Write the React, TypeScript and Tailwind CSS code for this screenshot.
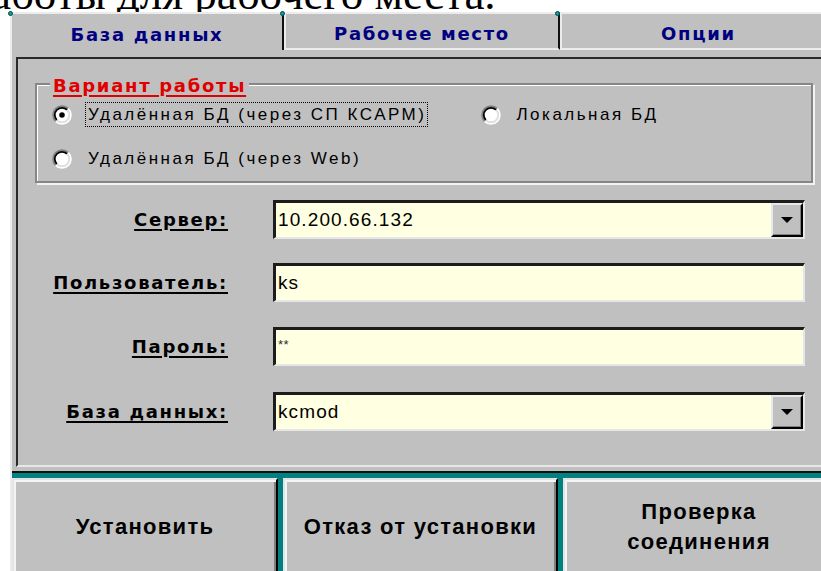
import React from "react";

const boldUi = "font-['DejaVu_Sans',sans-serif] font-bold text-[18px] tracking-[1.7px]";
const plainUi = "font-['Liberation_Sans',Arial,sans-serif] text-[17px] tracking-[2.5px]";
const fieldText = "font-['Liberation_Sans',Arial,sans-serif] text-[19px] tracking-[1.1px]";

function Radio({ checked }: { checked?: boolean }) {
  return (
    <svg width="20" height="20" viewBox="0 0 18 18" className="shrink-0">
      <circle cx="9" cy="9" r="7" fill="#fff" />
      <path d="M3.34 14.66 A8 8 0 0 1 14.66 3.34" fill="none" stroke="#808080" strokeWidth="1.6" />
      <path d="M14.66 3.34 A8 8 0 0 1 3.34 14.66" fill="none" stroke="#ffffff" strokeWidth="1.6" />
      <path d="M4.4 13.6 A6.5 6.5 0 0 1 13.6 4.4" fill="none" stroke="#000" strokeWidth="1.6" />
      <path d="M13.6 4.4 A6.5 6.5 0 0 1 4.4 13.6" fill="none" stroke="#dfdfdf" strokeWidth="1.6" />
      {checked && <circle cx="9" cy="9" r="2.5" fill="#000" />}
    </svg>
  );
}

function ArrowButton() {
  return (
    <div className="flex h-full w-[32px] shrink-0 items-center justify-center border-2 border-t-[#e8e8e8] border-l-[#e8e8e8] border-b-black border-r-black bg-[#c0c0c0] shadow-[inset_-1px_-1px_0_#808080]">
      <svg width="12" height="6" viewBox="0 0 12 6">
        <path d="M0 0H12L6 6Z" fill="#000" />
      </svg>
    </div>
  );
}

function Field({ value, combo, secret }: { value: string; combo?: boolean; secret?: boolean }) {
  return (
    <div className="flex h-[39px] w-[532px] border-t-[3px] border-l-[3px] border-b-2 border-r-2 border-t-[#1c1c1c] border-l-[#1c1c1c] border-b-[#e6e6e6] border-r-[#e6e6e6] bg-[#ffffe1]">
      {secret ? (
        <div className="flex-1 pl-[2px] pt-[8px] font-['Liberation_Sans',Arial,sans-serif] text-[13px] leading-[13px] tracking-[0.5px] text-[#303030]">
          {value}
        </div>
      ) : (
        <div className={`flex flex-1 items-center pl-[2px] text-black ${fieldText}`}>{value}</div>
      )}
      {combo && <ArrowButton />}
    </div>
  );
}

function Row({ label, children, top }: { label: string; children: React.ReactNode; top: string }) {
  return (
    <div className={`flex items-center ${top}`}>
      <div className="w-[210px] text-right text-black">
        <span className={`${boldUi} underline decoration-2 underline-offset-[3px]`}>{label}</span>
      </div>
      <div className="ml-[45px]">{children}</div>
    </div>
  );
}

function Tab({ title, active, last }: { title: string; active?: boolean; last?: boolean }) {
  const edges = active
    ? "w-[272px] border-t-2 border-r-2 border-t-[#ececec] border-r-[#101010]"
    : last
      ? "w-[275px] border-t-2 border-l-2 border-b-2 border-t-[#ececec] border-l-[#ececec] border-b-[#ececec]"
      : "w-[276px] border-t-2 border-l-2 border-r-2 border-b-2 border-t-[#ececec] border-l-[#ececec] border-b-[#ececec] border-r-[#101010]";
  return (
    <div className={`flex h-full shrink-0 items-center justify-center pt-[4px] ${edges}`}>
      <span className={`${boldUi} text-[#000080]`}>{title}</span>
    </div>
  );
}

function Pin({ left }: { left: string }) {
  return (
    <span className={`absolute top-[-1px] ${left} h-[5px] w-[5px] rounded-full border border-[#004848] bg-[#00a0a0]`} />
  );
}

function BigButton({ children, width }: { children: React.ReactNode; width: string }) {
  return (
    <div
      className={`flex h-[98px] ${width} shrink-0 items-center justify-center border-2 border-t-[#e4e4e4] border-l-[#e4e4e4] border-b-black border-r-black bg-[#c0c0c0] shadow-[inset_2px_2px_0_#f4f4f4,inset_-2px_-2px_0_#808080] text-center font-['Liberation_Sans',Arial,sans-serif] text-[22px] font-bold leading-[30px] tracking-[1.3px] text-black`}
    >
      {children}
    </div>
  );
}

export default function App() {
  return (
    <div className="relative h-[571px] w-[821px] overflow-hidden bg-white">
      {/* document line above the settings window */}
      <div className="h-[12px] overflow-hidden">
        <div className="ml-[-9px] mt-[-28px] whitespace-nowrap font-['Liberation_Serif','Times_New_Roman',serif] text-[45px] leading-[45px] text-black">
          аботы для рабочего места.
        </div>
      </div>

      {/* settings frame */}
      <div className="relative ml-[10px] w-[825px] border-l-2 border-l-[#ececec] bg-[#c0c0c0]">
        <div className="flex h-[38px]">
          <Tab title="База данных" active />
          <Tab title="Рабочее место" />
          <Tab title="Опции" last />
        </div>
        <Pin left="left-[-4px]" />
        <Pin left="left-[268px]" />
        <Pin left="left-[543px]" />

        <div className="border-b-2 border-b-[#101010] pb-[4px] pl-[4px] pt-[7px]">
          <div className="border-t-2 border-l-2 border-b-2 border-t-[#2a2a2a] border-l-[#2a2a2a] border-b-[#e6e6e6] pb-[34px]">
            {/* work mode group */}
            <div className="relative ml-[17px] mt-[24px] h-[100px] w-[778px] border-2 border-[#868686] shadow-[inset_1px_1px_0_#fff,2px_2px_0_#f2f2f2]">
              <div className="absolute left-[13px] top-[-13px] bg-[#c0c0c0] px-[3px]">
                <span className={`${boldUi} text-[#e00000] underline decoration-2 underline-offset-[3px]`}>
                  Вариант работы
                </span>
              </div>
              <div className="mt-[17px] flex h-[25px] items-center pl-[15px]">
                <Radio checked />
                <div className={`ml-[13px] flex h-[25px] items-center border border-dotted border-black pl-[2px] pr-[1px] text-black ${plainUi}`}>
                  Удалённая БД (через СП КСАРМ)
                </div>
                <div className="ml-[53px] flex items-center">
                  <Radio />
                  <span className={`ml-[15px] text-black ${plainUi}`}>Локальная БД</span>
                </div>
              </div>
              <div className="mt-[19px] flex h-[25px] items-center pl-[15px]">
                <Radio />
                <div className={`ml-[13px] flex h-[25px] items-center border border-transparent pl-[2px] text-black ${plainUi}`}>
                  Удалённая БД (через Web)
                </div>
              </div>
            </div>

            <Row label="Сервер:" top="mt-[17px]">
              <Field value="10.200.66.132" combo />
            </Row>
            <Row label="Пользователь:" top="mt-[24px]">
              <Field value="ks" />
            </Row>
            <Row label="Пароль:" top="mt-[25px]">
              <Field value="**" secret />
            </Row>
            <Row label="База данных:" top="mt-[26px]">
              <Field value="kcmod" combo />
            </Row>
          </div>
        </div>

        {/* action buttons */}
        <div className="flex gap-[5px] bg-[#008080] pt-[5px]">
          <BigButton width="w-[266px]">Установить</BigButton>
          <BigButton width="w-[275px]">Отказ от установки</BigButton>
          <BigButton width="w-[272px]">
            Проверка
            <br />
            соединения
          </BigButton>
        </div>
      </div>
    </div>
  );
}
